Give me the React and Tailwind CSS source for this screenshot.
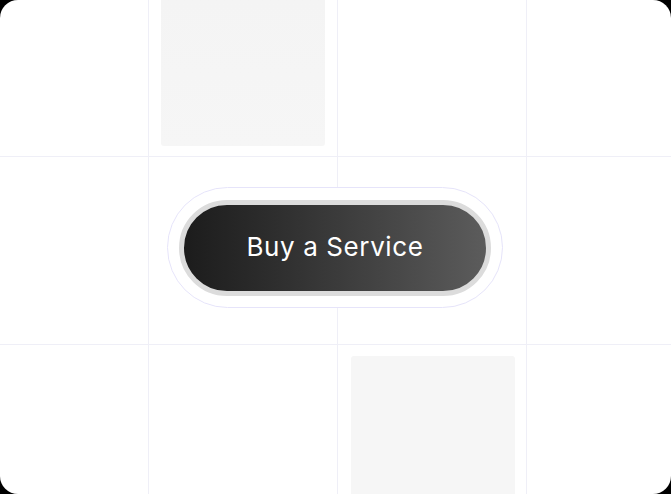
import React from "react";

export default function App() {
  const line = "border-[#efeff7]";
  return (
    <div className="w-[671px] h-[494px] bg-black">
      <div className="relative w-full h-full bg-white rounded-[18px] overflow-hidden">
        <div className="grid h-full grid-cols-[149px_189px_189px_1fr] grid-rows-[157px_188px_1fr]">
          {/* row 0 */}
          <div className={`border-r border-b ${line}`} />
          <div className={`border-r border-b ${line} pl-[12px]`}>
            <div className="w-[164px] h-[146px] rounded-b-[3px] bg-gradient-to-b from-[#f4f4f4] to-[#f6f6f6]" />
          </div>
          <div className={`border-r border-b ${line}`} />
          <div className={`border-b ${line}`} />
          {/* row 1 */}
          <div className={`border-r border-b ${line}`} />
          <div className={`border-r border-b ${line}`} />
          <div className={`border-r border-b ${line}`} />
          <div className={`border-b ${line}`} />
          {/* row 2 */}
          <div className={`border-r ${line}`} />
          <div className={`border-r ${line}`} />
          <div className={`border-r ${line} pl-[13px] pt-[11px] overflow-hidden`}>
            <div className="w-[164px] h-[160px] rounded-t-[3px] bg-[#f6f6f6]" />
          </div>
          <div />
        </div>

        {/* button overlay */}
        <div className="absolute left-[167px] top-[187px] w-[336px] h-[121px] rounded-full border border-[#e6e4fa] bg-white flex items-center justify-center">
          <div className="w-[312px] h-[96px] rounded-full border-[5px] border-[#dcdcdc] bg-gradient-to-r from-[#1c1c1c] to-[#5c5c5c] flex items-center justify-center">
            <span
              className="text-white text-[26px] leading-none tracking-[0.6px] pb-[1px]"
              style={{ fontFamily: "Inter, 'Open Sans', sans-serif" }}
            >
              Buy a Service
            </span>
          </div>
        </div>
      </div>
    </div>
  );
}
